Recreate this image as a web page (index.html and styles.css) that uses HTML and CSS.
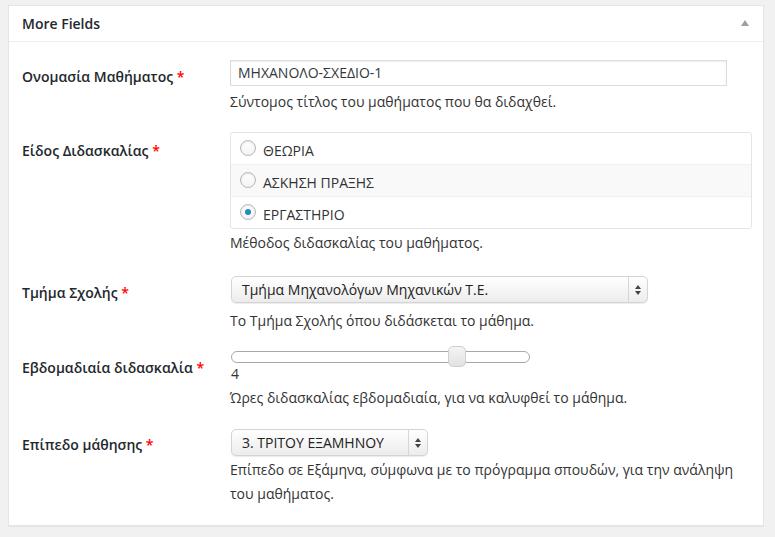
FILE: index.html
```html
<!DOCTYPE html>
<html lang="el">
<head>
<meta charset="utf-8">
<title>More Fields</title>
<link rel="stylesheet" href="styles.css">
</head>
<body>
<div class="postbox">
  <div class="hndle">
    <span class="title">More Fields</span>
    <span class="toggle"></span>
  </div>
  <div class="inside">
    <div class="row r1">
      <div class="label">Ονομασία Μαθήματος <span class="req">*</span></div>
      <div class="field">
        <div class="text-input">ΜΗΧΑΝΟΛΟ-ΣΧΕΔΙΟ-1</div>
        <p class="desc">Σύντομος τίτλος του μαθήματος που θα διδαχθεί.</p>
      </div>
    </div>
    <div class="row r2">
      <div class="label">Είδος Διδασκαλίας <span class="req">*</span></div>
      <div class="field">
        <ul class="radios">
          <li><span class="radio"></span>ΘΕΩΡΙΑ</li>
          <li class="alt"><span class="radio"></span>ΑΣΚΗΣΗ ΠΡΑΞΗΣ</li>
          <li><span class="radio checked"></span>ΕΡΓΑΣΤΗΡΙΟ</li>
        </ul>
        <p class="desc">Μέθοδος διδασκαλίας του μαθήματος.</p>
      </div>
    </div>
    <div class="row r3">
      <div class="label">Τμήμα Σχολής <span class="req">*</span></div>
      <div class="field">
        <div class="select wide"><span class="sel-text">Τμήμα Μηχανολόγων Μηχανικών Τ.Ε.</span><span class="arrows"><span class="up"></span><span class="down"></span></span></div>
        <p class="desc">Το Τμήμα Σχολής όπου διδάσκεται το μάθημα.</p>
      </div>
    </div>
    <div class="row r4">
      <div class="label">Εβδομαδιαία διδασκαλία <span class="req">*</span></div>
      <div class="field">
        <div class="range"><span class="thumb"></span></div>
        <div class="range-val">4</div>
        <p class="desc">Ώρες διδασκαλίας εβδομαδιαία, για να καλυφθεί το μάθημα.</p>
      </div>
    </div>
    <div class="row r5">
      <div class="label">Επίπεδο μάθησης <span class="req">*</span></div>
      <div class="field">
        <div class="select narrow"><span class="sel-text">3. ΤΡΙΤΟΥ ΕΞΑΜΗΝΟΥ</span><span class="arrows"><span class="up"></span><span class="down"></span></span></div>
        <p class="desc">Επίπεδο σε Εξάμηνα, σύμφωνα με το πρόγραμμα σπουδών, για την ανάληψη του μαθήματος.</p>
      </div>
    </div>
  </div>
</div>
</body>
</html>
```
FILE: styles.css
```css
html, body {
  margin: 0;
  padding: 0;
}
body {
  background: #f1f1f1;
  font-family: "Open Sans", "Noto Sans", sans-serif;
  font-size: 14px;
  color: #23282d;
  padding: 5px 9px 0 8px;
  height: 537px;
  box-sizing: border-box;
}
.postbox {
  background: #fff;
  border: 1px solid #e5e5e5;
  box-shadow: 0 1px 1px rgba(0,0,0,0.04);
  width: 756px;
  box-sizing: border-box;
}
.hndle {
  height: 35px;
  border-bottom: 1px solid #eee;
  display: flex;
  align-items: center;
  justify-content: space-between;
  padding: 0 14px 0 13px;
}
.title {
  font-weight: 600;
  font-size: 14px;
  color: #23282d;
  line-height: 20px;
  margin-top: 1px;
}
.toggle {
  width: 0;
  height: 0;
  border-left: 4px solid transparent;
  border-right: 4px solid transparent;
  border-bottom: 6px solid #9ba0a6;
  margin-top: -1px;
}
.inside {
  padding: 18px 0 1px 0;
}
.row {
  display: flex;
}
.label {
  width: 208px;
  padding-left: 13px;
  font-weight: 600;
  line-height: 20px;
  color: #23282d;
  padding-top: 7px;
  box-sizing: border-box;
  flex: none;
}
.req {
  color: #f00;
}
.field {
  flex: 1;
  padding-left: 13px;
}
.desc {
  margin: 0;
  line-height: 24px;
  color: #333;
  font-size: 14px;
  max-width: 505px;
}
.r1 { padding-bottom: 18px; }
.r1 .desc { margin-top: 4px; }
.r2 { padding-bottom: 21px; }
.r2 .label { padding-top: 9px; }
.r2 .desc { margin-top: 2px; }
.r3 { padding-bottom: 17px; }
.r3 .desc { margin-top: 6px; }
.r4 { padding-bottom: 19px; }
.r4 .label { padding-top: 8px; }
.r4 .desc { margin-top: 3px; }
.r5 { padding-bottom: 18px; }
.r5 .label { padding-top: 6px; }
.r5 .desc { margin-top: 2px; }

.text-input {
  width: 497px;
  height: 26px;
  box-sizing: border-box;
  border: 1px solid #ddd;
  box-shadow: inset 0 1px 2px rgba(0,0,0,0.07);
  padding: 0 7px;
  line-height: 24px;
  color: #32373c;
  font-size: 14px;
}
.radios {
  list-style: none;
  margin: 0;
  padding: 0;
  width: 522px;
  border: 1px solid #e5e5e5;
  border-radius: 3px;
  box-sizing: border-box;
}
.radios li {
  height: 32px;
  display: flex;
  align-items: center;
  padding-left: 9px;
  padding-top: 3px;
  border-bottom: 1px solid #f0f0f0;
  color: #333;
  font-size: 14px;
  box-sizing: border-box;
}
.radios li:last-child {
  border-bottom: none;
  height: 31px;
}
.radios li.alt {
  background: #f9f9f9;
}
.radio {
  width: 16px;
  height: 16px;
  border-radius: 50%;
  border: 1px solid #b4b9be;
  box-sizing: border-box;
  background: linear-gradient(#fff, #f3f3f3);
  box-shadow: inset 0 1px 2px rgba(0,0,0,0.1);
  margin-right: 7px;
  margin-top: -5px;
  position: relative;
  flex: none;
}
.radio.checked::after {
  content: "";
  position: absolute;
  left: 4px;
  top: 4px;
  width: 6px;
  height: 6px;
  border-radius: 50%;
  background: #1e8cbe;
}
.select {
  height: 27px;
  box-sizing: border-box;
  border: 1px solid #d4d4d4;
  border-radius: 5px;
  background: linear-gradient(#ffffff, #ececec);
  box-shadow: 0 1px 1px rgba(0,0,0,0.08);
  display: flex;
  align-items: center;
  justify-content: space-between;
  margin-left: 1px;
  color: #222;
}
.select.wide { width: 417px; }
.select.narrow { width: 197px; }
.sel-text {
  padding-left: 10px;
  line-height: 25px;
  font-size: 14px;
}
.arrows {
  width: 18px;
  height: 25px;
  border-left: 1px solid #d6d6d6;
  display: flex;
  flex-direction: column;
  align-items: center;
  justify-content: center;
  gap: 2px;
}
.up, .down {
  width: 0;
  height: 0;
  border-left: 3px solid transparent;
  border-right: 3px solid transparent;
}
.up { border-bottom: 4px solid #444; }
.down { border-top: 4px solid #444; }
.range {
  width: 299px;
  height: 12px;
  box-sizing: border-box;
  border: 1px solid #a8a8a8;
  border-radius: 6px;
  background: #fff;
  margin-left: 1px;
  margin-top: 1px;
  position: relative;
}
.thumb {
  position: absolute;
  left: 216px;
  top: -6px;
  width: 18px;
  height: 21px;
  box-sizing: border-box;
  border: 1px solid #cfcfcf;
  border-radius: 5px;
  background: linear-gradient(#f4f4f4, #e2e2e2);
}
.range-val {
  line-height: 18px;
  color: #333;
  margin-top: 2px;
  padding-left: 1px;
}
```
